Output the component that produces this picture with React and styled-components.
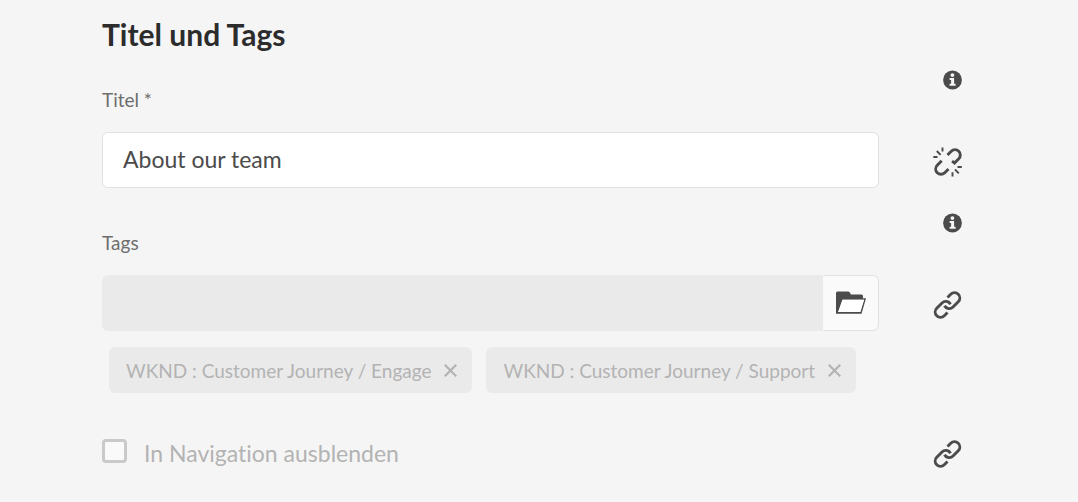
import React, { useState } from "react";
import styled, { createGlobalStyle } from "styled-components";

const GlobalStyle = createGlobalStyle`
  *, *::before, *::after { box-sizing: border-box; }
  body {
    margin: 0;
    background: #f5f5f5;
    color: #4b4b4b;
    font-family: Lato, "Noto Sans", sans-serif;
    font-variant-ligatures: none;
  }
  button, input { font-family: inherit; }
`;

const Page = styled.main`
  padding: 14px 116px 24px 102px;
`;

const Heading = styled.h2`
  margin: 0 0 16px;
  font-size: 30px;
  line-height: 40px;
  font-weight: 700;
  color: #2c2c2c;
`;

const Field = styled.div`
  display: grid;
  grid-template-columns: minmax(0, 1fr) 28px;
  column-gap: 55px;
  margin-bottom: ${(p) => p.$gap}px;
`;

const Label = styled.label`
  align-self: end;
  justify-self: start;
  padding: 18px 0 20px;
  font-size: 19px;
  line-height: 24px;
  color: #6e6e6e;
`;

const IconButton = styled.button`
  display: flex;
  align-self: center;
  justify-self: end;
  padding: 4px 0 0;
  border: 0;
  background: none;
  color: #4b4b4b;
  cursor: pointer;

  svg { display: block; overflow: visible; }
`;

const InfoButton = styled(IconButton)`
  align-self: start;
  padding: 0;
`;

const TextInput = styled.input`
  width: 100%;
  height: 56px;
  padding: 0 20px 2px;
  border: 1px solid #e1e1e1;
  border-radius: 6px;
  background: #fff;
  color: #4b4b4b;
  font-size: 23px;
  line-height: 32px;
`;

const Picker = styled.div`
  display: flex;
  height: 56px;
`;

const PickerInput = styled.input`
  flex: 1;
  min-width: 0;
  padding: 0 20px;
  border: 0;
  border-radius: 6px 0 0 6px;
  background: #eaeaea;
  font-size: 23px;
`;

const PickerButton = styled.button`
  display: flex;
  align-items: center;
  justify-content: center;
  width: 56px;
  padding: 0;
  border: 1px solid #e1e1e1;
  border-left-color: #fafafa;
  border-radius: 0 6px 6px 0;
  background: #fafafa;
  color: #4b4b4b;
  cursor: pointer;
`;

const TagList = styled.ul`
  grid-column: 1;
  display: flex;
  flex-wrap: wrap;
  gap: 14px;
  margin: 16px 0 0 7px;
  padding: 0;
  list-style: none;
`;

const Tag = styled.li`
  display: flex;
  align-items: center;
  gap: 13px;
  height: 46px;
  padding: 1px 15px 0 17px;
  border-radius: 6px;
  background: #eaeaea;
  color: #b3b3b3;
  font-size: 19px;
  line-height: 24px;
  white-space: nowrap;
`;

const RemoveButton = styled.button`
  display: flex;
  padding: 0 0 1px;
  border: 0;
  background: none;
  color: inherit;
`;

const CheckLabel = styled.label`
  display: flex;
  align-items: center;
  justify-self: start;
  gap: 17px;
  padding-top: 2px;
  color: #b3b3b3;
  font-size: 23px;
  line-height: 28px;
`;

const Checkbox = styled.input`
  appearance: none;
  width: 25px;
  height: 24px;
  margin: 0 0 4px;
  border: 3px solid #cacaca;
  border-radius: 4px;
  background: #fafafa;
`;

const InfoIcon = () => (
  <svg width="19" height="20" viewBox="0 0 19 20" aria-hidden="true">
    <circle cx="9.5" cy="10" r="9.4" fill="currentColor" />
    <circle cx="9.4" cy="5.1" r="1.9" fill="#f5f5f5" />
    <path d="M6.6 8.1h4.5v5.7h1.5v1.9h-6v-1.9h1.5V10H6.6z" fill="#f5f5f5" />
  </svg>
);

const LinkIcon = () => (
  <svg width="28" height="28" viewBox="0 0 28 28" fill="none" stroke="currentColor" strokeWidth="2.9" aria-hidden="true">
    <path d="M13.5 6.5l3.25-3.25a5.3 5.3 0 0 1 7.5 7.5L19 16a5.3 5.3 0 0 1-8.5-1.2" />
    <path d="M13.5 21.5l-3.25 3.25a5.3 5.3 0 0 1-7.5-7.5L8 12a5.3 5.3 0 0 1 8.5 1.2" />
  </svg>
);

const UnlinkIcon = () => (
  <svg width="28" height="28" viewBox="0 0 28 28" fill="none" stroke="currentColor" strokeWidth="2.9" aria-hidden="true">
    <path d="M13.5 7l3.75-3.75a5.3 5.3 0 0 1 7.5 7.5L20.5 15l-2.4-1.8" />
    <path d="M7.7 12.8l-4.45 4.45a5.3 5.3 0 0 0 7.5 7.5L14.5 21" />
    <path strokeWidth="1.9" d="M8.5-.5v4M-.7 9h4.2M2.8 3l3.8 3.8M23.5 19h4.3M18.5 24.3v4.2M21 21.5l3.8 3.8" />
  </svg>
);

const FolderIcon = () => (
  <svg width="32" height="24" viewBox="0 0 32 24" fillRule="evenodd" aria-hidden="true">
    <path
      fill="currentColor"
      d="M1 2Q1 .5 2.5 .5H13Q14 .5 14.6 1.3L16 3.5H26.5Q28 3.5 28 5V7.2H31L26.5 22.8H1zM7.5 8.7L3.2 21.1H25.3L29.1 8.7z"
    />
    <path fill="#fff" d="M7.5 8.7L3.2 21.1H25.3L29.1 8.7z" />
  </svg>
);

const CloseIcon = () => (
  <svg width="13" height="13" viewBox="0 0 13 13" stroke="currentColor" strokeWidth="2.2" aria-hidden="true">
    <path d="M.8.8l11.4 11.4M12.2.8L.8 12.2" />
  </svg>
);

const tags = ["WKND : Customer Journey / Engage", "WKND : Customer Journey / Support"];

export default function App() {
  const [title, setTitle] = useState("About our team");

  return (
    <>
      <GlobalStyle />
      <Page>
        <Heading>Titel und Tags</Heading>

        <Field $gap={25}>
          <Label htmlFor="title">Titel *</Label>
          <InfoButton type="button" aria-label="Info">
            <InfoIcon />
          </InfoButton>
          <TextInput id="title" value={title} onChange={(e) => setTitle(e.target.value)} />
          <IconButton type="button" aria-label="Unlink">
            <UnlinkIcon />
          </IconButton>
        </Field>

        <Field $gap={43}>
          <Label htmlFor="tags">Tags</Label>
          <InfoButton type="button" aria-label="Info">
            <InfoIcon />
          </InfoButton>
          <Picker>
            <PickerInput id="tags" disabled />
            <PickerButton type="button" aria-label="Open">
              <FolderIcon />
            </PickerButton>
          </Picker>
          <IconButton type="button" aria-label="Link">
            <LinkIcon />
          </IconButton>
          <TagList>
            {tags.map((tag) => (
              <Tag key={tag}>
                {tag}
                <RemoveButton type="button" disabled aria-label="Remove">
                  <CloseIcon />
                </RemoveButton>
              </Tag>
            ))}
          </TagList>
        </Field>

        <Field $gap={0}>
          <CheckLabel>
            <Checkbox type="checkbox" disabled />
            In Navigation ausblenden
          </CheckLabel>
          <IconButton type="button" aria-label="Link">
            <LinkIcon />
          </IconButton>
        </Field>
      </Page>
    </>
  );
}
